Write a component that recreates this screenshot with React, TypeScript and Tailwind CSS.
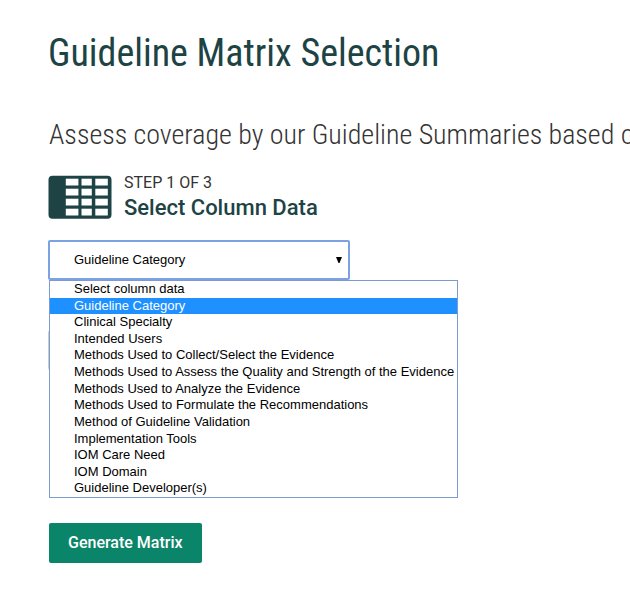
import { useState } from "react";

const categories = [
  "Select column data",
  "Guideline Category",
  "Clinical Specialty",
  "Intended Users",
  "Methods Used to Collect/Select the Evidence",
  "Methods Used to Assess the Quality and Strength of the Evidence",
  "Methods Used to Analyze the Evidence",
  "Methods Used to Formulate the Recommendations",
  "Method of Guideline Validation",
  "Implementation Tools",
  "IOM Care Need",
  "IOM Domain",
  "Guideline Developer(s)",
];

function ColumnsIcon() {
  return (
    <svg width="64" height="44" viewBox="0 0 64 44" aria-hidden="true" className="shrink-0">
      <rect x="0.5" y="0.7" width="63" height="43" rx="4" fill="#1e4345" />
      {[3.7, 13.7, 23.7, 33.7].map((y) => (
        <g key={y} fill="#ffffff">
          <rect x="17.8" y={y} width="12.6" height="6.8" />
          <rect x="33.5" y={y} width="10.3" height="6.8" />
          <rect x="47.3" y={y} width="12.5" height="6.8" />
        </g>
      ))}
    </svg>
  );
}

export default function App() {
  const [selected, setSelected] = useState("Guideline Category");

  return (
    <main className="min-h-screen overflow-x-hidden bg-white pt-[25px] pb-10 pl-12 font-[Roboto,sans-serif] text-[#333333]">
      <h1 className="font-['Roboto_Condensed',Roboto,sans-serif] text-[38px] leading-14 font-normal text-[#1e4345]">
        Guideline Matrix Selection
      </h1>
      <p className="mt-9 pl-px font-['Roboto_Condensed',Roboto,sans-serif] text-[28px] leading-9 font-light whitespace-nowrap">
        Assess coverage by our Guideline Summaries based on
      </p>

      <section className="mt-5">
        <div className="flex items-start gap-3">
          <div className="pt-0.5">
            <ColumnsIcon />
          </div>
          <div>
            <div className="text-base leading-5">STEP 1 OF 3</div>
            <h2 className="text-[22px] leading-[30px] font-medium text-[#1e4345]">
              <label htmlFor="column-data">Select Column Data</label>
            </h2>
          </div>
        </div>

        <div className="relative mt-[17px] w-[302px] max-w-full">
          <select
            id="column-data"
            value={selected}
            onChange={(e) => setSelected(e.target.value)}
            className="block h-10 w-full appearance-none rounded-xs border-2 border-[#7da2e3] bg-white px-6 font-['Liberation_Sans',Arial,sans-serif] text-[13px] text-black outline-none"
          >
            {categories.map((c) => (
              <option key={c}>{c}</option>
            ))}
          </select>
          <svg width="6" height="6" viewBox="0 0 6 6" aria-hidden="true" className="pointer-events-none absolute top-[17px] right-2">
            <path d="M0 0h6L3.5 6h-1z" fill="#000000" />
          </svg>
          <ul
            role="listbox"
            aria-label="Column data"
            className="absolute top-full left-px z-10 grid h-[218px] auto-rows-fr border border-[#7b9bd1] bg-white font-['Liberation_Sans',Arial,sans-serif] text-[13px] whitespace-nowrap text-black"
          >
            {categories.map((c) => (
              <li
                key={c}
                role="option"
                aria-selected={c === selected}
                onClick={() => setSelected(c)}
                className={
                  c === selected
                    ? "bg-[#1e90ff] pr-[3px] pl-6 leading-4 text-white"
                    : "pr-[3px] pl-6 leading-4"
                }
              >
                {c}
              </li>
            ))}
          </ul>
        </div>
      </section>

      <section className="mt-12 opacity-50">
        <ColumnsIcon />
      </section>

      <button
        type="button"
        className="mt-[151px] ml-px h-10 rounded-xs bg-[#0b8569] px-[19px] text-base font-medium text-white"
      >
        Generate Matrix
      </button>
    </main>
  );
}
